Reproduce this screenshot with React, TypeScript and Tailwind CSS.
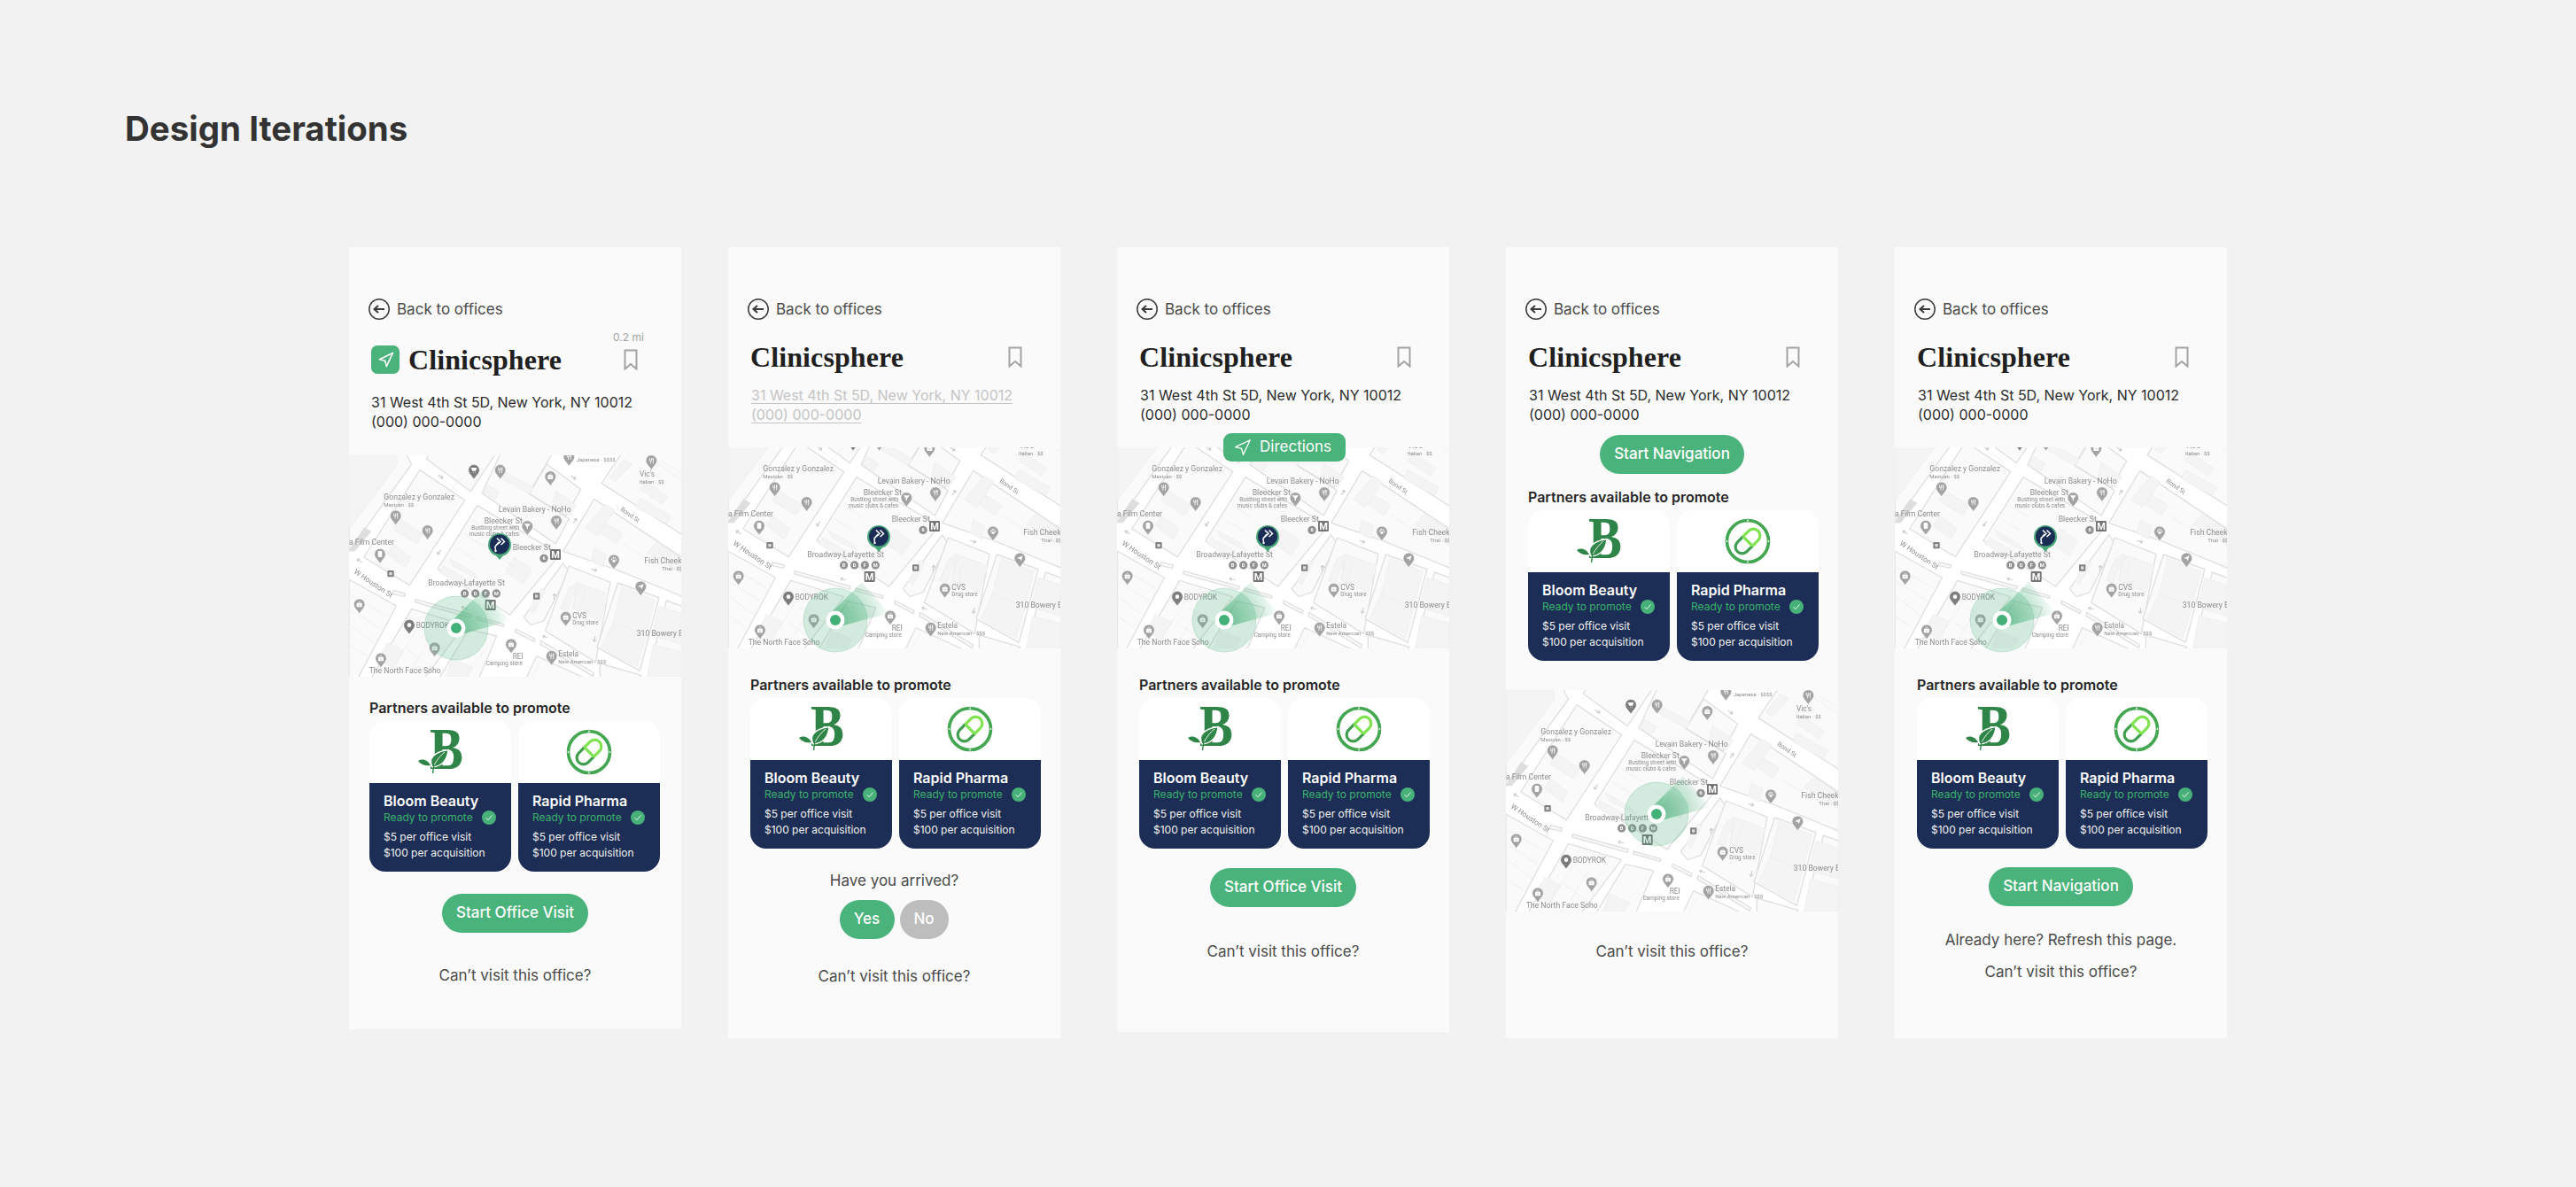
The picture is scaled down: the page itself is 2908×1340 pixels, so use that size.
import { Navigation } from "lucide-react";

const blocks = [
  "0,0 192,-5 212,30 0,325",
  "240,50 392,152 205,440 50,345",
  "275,-10 262,12 412,122 500,-10",
  "515,-10 450,128 700,300 745,215 610,130 690,-10",
  "670,30 785,115 735,205 610,130",
  "435,170 715,335 545,540 300,385",
  "725,365 592,548 615,575 660,560 745,395",
  "745,375 885,430 835,700 665,595",
  "910,432 1050,482 985,730 840,650",
  "1075,492 1130,512 1130,755 1010,755",
  "830,148 1130,348 1130,478 900,385 725,325",
  "855,95 925,-10 1130,-10 1130,270",
  "212,520 392,575 255,755 75,755",
  "0,420 160,510 30,755 0,755",
  "405,590 500,612 440,755 305,755",
  "635,680 800,755 600,755",
  "225,488 415,540 412,550 225,498",
  "432,546 525,572 523,580 432,555",
  "565,588 630,622 628,632 563,598",
  "650,628 830,738 826,748 648,640",
  "150,458 190,468 188,478 150,470",
  "850,705 990,745 980,755 850,755",
];

const buildings = [
  "0,0 160,0 165,30 0,250",
  "530,55 625,110 610,130 520,80",
  "700,120 770,170 745,205 690,165",
  "800,245 868,165 900,185 840,272",
  "870,230 925,265 905,300 850,262",
  "930,15 960,30 900,90 880,75",
  "985,145 1090,205 1075,232 970,175",
  "1000,85 1080,140 1060,165 985,115",
  "1040,295 1125,350 1125,400 1010,330",
  "830,315 870,335 860,380 820,360",
  "745,450 775,430 740,530 715,520",
  "770,430 880,470 850,560 760,520",
  "925,445 1035,490 1005,610 895,565",
  "895,565 1005,610 975,715 855,650",
  "1050,510 1125,535 1125,640 1025,610",
  "1030,640 1125,665 1125,750 1010,750",
  "350,690 420,720 400,750 330,750",
  "130,635 185,660 150,720 100,690",
  "320,375 400,420 385,445 305,395",
  "340,350 420,395 440,420 350,375",
  "150,300 210,345 190,380 130,335",
  "170,215 250,265 230,300 150,250",
  "470,100 510,125 495,150 455,125",
  "560,345 620,385 590,435 530,395",
  "610,520 650,450 665,460 625,535",
];

const lots = [
  "M0,470 L130,545", "M0,520 L110,590", "M0,570 L90,640", "M0,640 L60,680",
  "M90,360 L140,390", "M120,320 L170,350", "M330,130 L400,60", "M300,70 L370,120",
  "M360,310 L430,355", "M390,265 L460,310", "M420,220 L490,265", "M450,180 L530,230",
  "M500,340 L570,385", "M460,400 L530,445", "M680,250 L720,200", "M1010,0 L1125,85",
  "M1060,20 L1125,60", "M200,660 L300,730", "M240,610 L330,665", "M230,590 L160,700",
  "M280,610 L215,720", "M780,440 L735,580", "M800,450 L760,590", "M930,300 L1000,345",
  "M1040,440 L1125,480", "M470,650 L400,730", "M650,700 L620,750",
];

const arrows = [
  [310, 72, 35], [760, 75, 35], [305, 328, 125], [35, 357, 215], [765, 222, -55], [830, 388, 15],
  [695, 478, -80], [390, 516, 195], [665, 615, 200], [832, 622, 100],
];

const labels: [string, number, number, number][] = [
  ["Japanese · $$$$", 770, 22, 18],
  ["Vic's", 984, 71, 25],
  ["Italian · $$", 984, 95, 18],
  ["Gonzalez y Gonzalez", 118, 151, 26],
  ["Mexican · $$", 118, 175, 18],
  ["Levain Bakery - NoHo", 506, 191, 26],
  ["Bleecker St", 458, 231, 26],
  ["Bustling street with", 415, 253, 19],
  ["music clubs & cafes", 407, 273, 19],
  ["a Film Center", 0, 303, 26],
  ["Bleecker St", 554, 322, 26],
  ["Fish Cheeks", 1000, 366, 26],
  ["Thai · $$", 1060, 389, 18],
  ["Broadway-Lafayette St", 268, 442, 26],
  ["BODYROK", 227, 586, 25],
  ["CVS", 757, 551, 25],
  ["Drug store", 757, 573, 19],
  ["310 Bowery Bar", 974, 611, 26],
  ["REI", 554, 689, 25],
  ["Camping store", 464, 711, 19],
  ["Estela", 709, 682, 25],
  ["New American · $$$", 709, 705, 18],
  ["The North Face Soho", 68, 738, 26],
];

const pins: [number, number, string][] = [
  [423, 50, "cart"], [512, 50, "fork"], [682, 72, "bag"], [745, 5, "fork"], [1024, 18, "fork"],
  [158, 205, "fork"], [266, 255, "fork"], [604, 240, "cup"], [702, 222, "fork"], [105, 335, "film"],
  [897, 355, "paw"], [988, 445, "plane"], [35, 505, "bag"], [204, 575, "dot"], [734, 548, "bag"],
  [290, 652, "bag"], [549, 640, "bag"], [108, 688, "bag"], [686, 680, "fork"],
];

function PinGlyph({ kind }: { kind: string }) {
  if (kind === "fork")
    return <path d="M-6,-9 V0 M0,-9 V0 M6,-9 V0 M-6,0 H2 M-2,0 V10 M6,-9 V10" stroke="#fff" strokeWidth="2.4" fill="none" />;
  if (kind === "bag")
    return (
      <g>
        <rect x="-9" y="-5" width="18" height="14" rx="2" fill="#fff" />
        <path d="M-4,-5 C-4,-11 4,-11 4,-5" stroke="#fff" strokeWidth="2" fill="none" />
        <path d="M-4,1 C-2,4 2,4 4,1" stroke="#999" strokeWidth="1.6" fill="none" />
      </g>
    );
  if (kind === "cart") return <path d="M-10,-8 H10 L6,3 H-5 Z M-3,7 h2 v2 h-2 Z M3,7 h2 v2 h-2 Z" fill="#fff" />;
  if (kind === "cup") return <path d="M-11,-8 H11 L2,2 V9 H-2 V2 Z" fill="#fff" />;
  if (kind === "film") return <rect x="-7" y="-11" width="14" height="21" rx="4" fill="#fff" />;
  if (kind === "paw")
    return (
      <g fill="#fff">
        <circle cx="0" cy="3" r="5" />
        <circle cx="-7" cy="-3" r="2.6" />
        <circle cx="-2" cy="-8" r="2.6" />
        <circle cx="4" cy="-7" r="2.6" />
        <circle cx="8" cy="-1" r="2.6" />
      </g>
    );
  if (kind === "plane") return <path d="M-10,-1 L10,-9 L4,9 L1,2 Z" fill="#fff" />;
  return <circle cx="0" cy="0" r="7" fill="#fff" />;
}

function MapPin({ x, y, kind }: { x: number; y: number; kind: string }) {
  const fill = kind === "dot" || kind === "cart" ? "#7d7d7d" : "#a3a3a3";
  return (
    <g transform={`translate(${x} ${y})`}>
      <path d="M-19,0 A19,19 0 1 1 19,0 C19,12 6,20 0,32 C-6,20 -19,12 -19,0 Z" fill={fill} stroke="#fff" strokeWidth="2" />
      <PinGlyph kind={kind} />
    </g>
  );
}

function Transit({ x, y, label }: { x: number; y: number; label: string }) {
  return (
    <g>
      <circle cx={x} cy={y} r="14" fill="#919191" />
      <text x={x} y={y + 6} textAnchor="middle" fontSize="17" fontWeight="700" fill="#fff" fontFamily="Roboto, sans-serif">
        {label}
      </text>
    </g>
  );
}

function MetroSign({ x, y }: { x: number; y: number }) {
  return (
    <g>
      <rect x={x - 18} y={y - 18} width="36" height="36" rx="4" fill="#757575" />
      <text x={x} y={y + 12} textAnchor="middle" fontSize="33" fontWeight="700" fill="#fff" fontFamily="Roboto, sans-serif">
        M
      </text>
    </g>
  );
}

function MapBase({ cropped }: { cropped?: boolean }) {
  return (
    <svg
      width="375"
      height={cropped ? 227 : 250}
      viewBox={cropped ? "0 69 1125 681" : "0 0 1125 750"}
      className="block bg-white blur-[0.35px]"
    >
      {blocks.map((p) => (
        <polygon key={p} points={p} fill="#fafafa" stroke="#e0e0e0" strokeWidth="4" strokeLinejoin="round" />
      ))}
      {buildings.map((p) => (
        <polygon key={p} points={p} fill="#f4f4f4" stroke="#ebebeb" strokeWidth="2" />
      ))}
      <polygon points="0,320 52,243 76,258 20,325 0,325" fill="#dedede" />
      {lots.map((d) => (
        <path key={d} d={d} stroke="#ebebeb" strokeWidth="2" fill="none" />
      ))}
      {arrows.map(([x, y, r]) => (
        <path
          key={`${x}-${y}`}
          transform={`translate(${x} ${y}) rotate(${r})`}
          d="M-10,0 H8 M2,-6 L9,0 L2,6"
          stroke="#c8c8c8"
          strokeWidth="3"
          fill="none"
        />
      ))}
      <g fontFamily="Roboto, sans-serif" fill="#8c8c8c">
        {labels.map(([t, x, y, s]) => (
          <text key={`${t}-${y}`} x={x} y={y} fontSize={s}>
            {t}
          </text>
        ))}
        <text transform="translate(15 398) rotate(34)" fontSize="25">W Houston St</text>
        <text transform="translate(918 186) rotate(35)" fontSize="21">Bond St</text>
      </g>
      {pins.map(([x, y, k]) => (
        <MapPin key={`${x}-${y}`} x={x} y={y} kind={k} />
      ))}
      <Transit x={392} y={468} label="B" />
      <Transit x={428} y={468} label="D" />
      <Transit x={463} y={468} label="F" />
      <Transit x={499} y={468} label="M" />
      <Transit x={660} y={349} label="6" />
      <MetroSign x={479} y={507} />
      <MetroSign x={699} y={336} />
      <rect x="130" y="390" width="22" height="22" rx="3" fill="#808080" />
      <rect x="136" y="396" width="10" height="10" fill="#ddd" />
      <rect x="624" y="466" width="22" height="22" rx="3" fill="#808080" />
      <rect x="630" y="472" width="10" height="10" fill="#ddd" />
    </svg>
  );
}

function LocationDot() {
  return (
    <svg width="130" height="130" viewBox="-65 -65 130 130" className="block">
      <defs>
        <radialGradient id="beam" gradientUnits="userSpaceOnUse" cx="0" cy="0" r="62">
          <stop offset="0" stopColor="#3aa86e" stopOpacity="0.7" />
          <stop offset="0.55" stopColor="#4ab37b" stopOpacity="0.35" />
          <stop offset="1" stopColor="#4ab37b" stopOpacity="0" />
        </radialGradient>
      </defs>
      <circle r="36" fill="#4ab37b" fillOpacity="0.22" stroke="#4ab37b" strokeOpacity="0.25" />
      <polygon points="-4,-9 30,-43 61,-8 6,7" fill="url(#beam)" />
      <circle r="10.5" fill="#fff" />
      <circle r="6" fill="#42b077" />
    </svg>
  );
}

function OfficePin() {
  return (
    <svg width="30" height="36" viewBox="0 0 30 36" className="block">
      <circle cx="15" cy="14" r="13" fill="#48a878" />
      <path d="M10,25 L15,31 L20,25 Z" fill="#48a878" />
      <circle cx="15" cy="13.5" r="11" fill="#1c2d55" />
      <path d="M12,6.5 L16,10.5 L12,14 M16.5,6.5 L20.5,10.5 L16.5,14 M14,11 L10,16 L10.5,21" stroke="#fff" strokeWidth="1.5" fill="none" />
      <circle cx="10.5" cy="21" r="1.2" fill="#fff" />
    </svg>
  );
}

function OfficeMap({ cropped, centerDot, pin = true, className }: { cropped?: boolean; centerDot?: boolean; pin?: boolean; className?: string }) {
  return (
    <div className={`relative ${className ?? ""}`}>
      <div className="overflow-hidden">
        <MapBase cropped={cropped} />
      </div>
      {pin && (
        <div className="absolute left-[155px] top-[87px]">
          <OfficePin />
        </div>
      )}
      <div className={`absolute -translate-x-1/2 -translate-y-1/2 ${centerDot ? "left-[170px] top-[140px]" : "left-[121px] top-[195px]"}`}>
        <LocationDot />
      </div>
    </div>
  );
}

function BackLink() {
  return (
    <div className="flex h-6 items-center gap-2 text-[17px] text-[#4a4a4a]">
      <svg width="24" height="24" viewBox="0 0 24 24" fill="none" stroke="#3a3a3a" strokeWidth="1.5">
        <circle cx="12" cy="12" r="11.2" />
        <path d="M18 12H6.5M11 8l-4.5 4 4.5 4" strokeWidth="2" />
      </svg>
      <span className="pt-[2px]">Back to offices</span>
    </div>
  );
}

function Bookmark() {
  return (
    <svg width="16" height="24" viewBox="0 0 16 24" fill="none" stroke="#a3a3a3" strokeWidth="2" className="block">
      <path d="M1.5 1.5h13v21L8 17l-6.5 5.5z" />
    </svg>
  );
}

function BloomLogo() {
  return (
    <svg width="90" height="60" viewBox="0 0 90 60" className="block">
      <text fontSize="67" fontWeight="700" fill="#2f8447" fontFamily="'Liberation Serif', serif" transform="translate(33 49) scale(0.85 1)">
        B
      </text>
      <path d="M36 47 C31 37 38 30 54 27.5 C53 38 48 46 36 47 Z" fill="#2f8447" stroke="#fff" strokeWidth="1.4" />
      <path d="M38 45 C41 39 45 34 50 30" stroke="#fff" strokeWidth="0.9" fill="none" />
      <path d="M38 44 L36.5 54" stroke="#2f8447" strokeWidth="1.4" fill="none" />
      <path d="M20 40 C25 37 31 39 34 45 C28 46 23 44 20 40 Z" fill="#2f8447" />
    </svg>
  );
}

function PharmaLogo() {
  return (
    <svg width="52" height="52" viewBox="-26 -26 52 52" className="block">
      <circle r="23.5" fill="none" stroke="#43a650" strokeWidth="3.6" />
      <g transform="rotate(-45)">
        <path d="M0 -7.5 H-9 A7.5 7.5 0 0 0 -9 7.5 H0" fill="none" stroke="#3f9e50" strokeWidth="3.2" />
        <path d="M0 -7.5 H9 A7.5 7.5 0 0 1 9 7.5 H0" fill="none" stroke="#7fe34f" strokeWidth="3.2" />
        <path d="M0 -7.5 V7.5" stroke="#7fe34f" strokeWidth="3.2" />
      </g>
      <g fill="#fff">
        <circle cx="0" cy="-23.5" r="0.9" />
        <circle cx="0" cy="23.5" r="0.9" />
        <circle cx="-23.5" cy="0" r="0.9" />
        <circle cx="23.5" cy="0" r="0.9" />
      </g>
    </svg>
  );
}

function PartnerCard({ name, logo }: { name: string; logo: "bloom" | "pharma" }) {
  return (
    <div className="w-[160px] overflow-hidden rounded-[18px]">
      <div className="flex h-[70px] items-center justify-center bg-white">
        {logo === "bloom" ? <BloomLogo /> : <PharmaLogo />}
      </div>
      <div className="h-[100px] bg-[#1d2e56] pl-[16px] pt-[10px] text-white">
        <p className="text-[16px] font-semibold leading-[20px]">{name}</p>
        <div className="flex h-[18px] items-center gap-[10px]">
          <span className="text-[12px] text-[#39b26b]">Ready to promote</span>
          <svg width="16" height="16" viewBox="0 0 16 16">
            <circle cx="8" cy="8" r="8" fill="#48b17a" />
            <path d="M4.5 8.3l2.4 2.4 4.6-5.2" stroke="#fff" strokeWidth="0.9" fill="none" />
          </svg>
        </div>
        <p className="mt-[4px] text-[12px] leading-[18px] text-[#f1f1f1]">$5 per office visit</p>
        <p className="text-[12px] leading-[18px] text-[#f1f1f1]">$100 per acquisition</p>
      </div>
    </div>
  );
}

function Partners({ className }: { className: string }) {
  return (
    <div className={className}>
      <p className="h-[20px] text-[16px] font-semibold leading-[20px] text-[#262626]">Partners available to promote</p>
      <div className="mt-[5px] flex gap-2">
        <PartnerCard name="Bloom Beauty" logo="bloom" />
        <PartnerCard name="Rapid Pharma" logo="pharma" />
      </div>
    </div>
  );
}

function PillButton({ label, className }: { label: string; className?: string }) {
  return (
    <div className={`flex justify-center ${className ?? ""}`}>
      <div className="flex h-11 items-center rounded-full bg-[#4ab37b] px-[16px] text-[17px] font-medium text-white">{label}</div>
    </div>
  );
}

function Note({ label, className }: { label: string; className?: string }) {
  return <p className={`h-[22px] text-center text-[17px] leading-[22px] text-[#4a4a4a] ${className ?? ""}`}>{label}</p>;
}

function Header({ muted, tile }: { muted?: boolean; tile?: boolean }) {
  return (
    <div className={tile ? "pl-[25px]" : "pl-[26px]"}>
      <div className={tile ? "-ml-[3px]" : "-ml-[4px]"}>
        <BackLink />
      </div>
      <div className={`flex h-8 items-center justify-between ${tile ? "mt-[29px] pr-[49px]" : "mt-[26px] pr-[43px]"}`}>
        <div className="flex items-center gap-[11px]">
          {tile && (
            <div className="flex h-8 w-8 items-center justify-center rounded-[7px] bg-[#4ab37b]">
              <Navigation size={19} color="#fff" strokeWidth={2} />
            </div>
          )}
          <h2 className="-ml-[1px] font-['Liberation_Serif',serif] text-[32px] font-bold leading-8 tracking-[0.1px] text-[#1f1f1f]">Clinicsphere</h2>
        </div>
        <div className="relative">
          {tile && <span className="absolute bottom-[29px] left-[-12px] whitespace-nowrap text-[12px] leading-[16px] text-[#a3a3a3]">0.2 mi</span>}
          <Bookmark />
        </div>
      </div>
      <div
        className={`text-[16px] leading-[22px] ${tile ? "mt-[21px]" : "mt-[16px]"} ${muted ? "text-[#c4c4c4] underline decoration-1 underline-offset-[3px]" : "text-[#2b2b2b]"}`}
      >
        <p>31 West 4th St 5D, New York, NY 10012</p>
        <p>(000) 000-0000</p>
      </div>
    </div>
  );
}

function Panel({ className, children }: { className: string; children: React.ReactNode }) {
  return <section className={`w-[375px] shrink-0 bg-[#fafafa] pt-[58px] ${className}`}>{children}</section>;
}

export default function App() {
  return (
    <div className="h-[1340px] w-[2908px] overflow-hidden bg-[#f2f2f2] font-['Inter',sans-serif]">
      <h1 className="pl-[141px] pt-[122px] text-[38.5px] font-bold leading-[46px] text-[#333333]">Design Iterations</h1>
      <div className="mt-[111px] flex items-start pl-[394px]">
        <Panel className="mr-[53px] h-[883px]">
          <Header tile />
          <OfficeMap className="mt-[27px]" />
          <Partners className="mt-[25px] pl-[23px]" />
          <PillButton label="Start Office Visit" className="mt-[25px]" />
          <Note label="Can’t visit this office?" className="mt-[37px]" />
        </Panel>
        <Panel className="mr-[64px] h-[893px]">
          <Header muted />
          <OfficeMap cropped className="mt-[26px]" />
          <Partners className="mt-[31px] pl-[25px]" />
          <Note label="Have you arrived?" className="mt-[25px]" />
          <div className="mt-[11px] flex justify-center gap-[6px] pr-[1px]">
            <div className="flex h-11 w-[62px] items-center justify-center rounded-full bg-[#4ab37b] text-[17px] font-medium text-white">Yes</div>
            <div className="flex h-11 w-[55px] items-center justify-center rounded-full bg-[#bdbdbd] text-[17px] font-medium text-white">No</div>
          </div>
          <Note label="Can’t visit this office?" className="mt-[31px]" />
        </Panel>
        <Panel className="mr-[64px] h-[886px]">
          <Header />
          <div className="relative">
            <OfficeMap cropped className="mt-[26px]" />
            <div className="absolute left-[120px] top-[-16px] flex h-8 w-[138px] items-center gap-[9px] rounded-[9px] bg-[#4ab37b] pl-[11px] text-[17px] text-white">
              <Navigation size={21} color="#fff" strokeWidth={1.5} />
              <span>Directions</span>
            </div>
          </div>
          <Partners className="mt-[31px] pl-[25px]" />
          <PillButton label="Start Office Visit" className="mt-[22px]" />
          <Note label="Can’t visit this office?" className="mt-[39px]" />
        </Panel>
        <Panel className="mr-[64px] h-[893px]">
          <Header />
          <PillButton label="Start Navigation" className="mt-[12px]" />
          <Partners className="mt-[16px] pl-[25px]" />
          <OfficeMap centerDot pin={false} className="mt-[33px]" />
          <Note label="Can’t visit this office?" className="mt-[34px]" />
        </Panel>
        <Panel className="h-[893px]">
          <Header />
          <OfficeMap cropped className="mt-[26px]" />
          <Partners className="mt-[31px] pl-[25px]" />
          <PillButton label="Start Navigation" className="mt-[21px]" />
          <Note label="Already here? Refresh this page." className="mt-[27px]" />
          <Note label="Can’t visit this office?" className="mt-[14px]" />
        </Panel>
      </div>
    </div>
  );
}
